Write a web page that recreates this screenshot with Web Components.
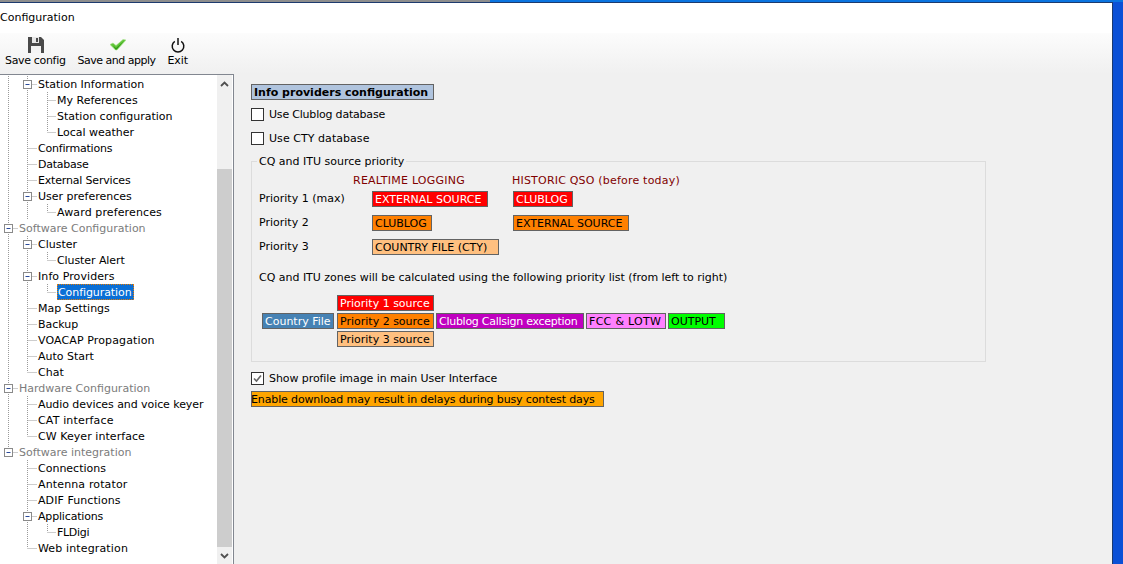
<!DOCTYPE html>
<html><head><meta charset="utf-8">
<style>
html,body{margin:0;padding:0;height:100%;overflow:hidden;background:#0b50d6}
body{font:11px "DejaVu Sans",sans-serif;color:#000}
</style></head>
<body>
<app-window>
  <span slot="title">Configuration</span>
  <tool-button slot="tools" icon="save" label="Save config" ls="-.33"></tool-button>
  <tool-button slot="tools" icon="check" label="Save and apply" ls="-.5"></tool-button>
  <tool-button slot="tools" icon="power" label="Exit" ls="-.1"></tool-button>
  <tree-view slot="tree"></tree-view>
  <info-panel slot="main"></info-panel>
</app-window>
<script>
function shadow(el,html){el.attachShadow({mode:'open'}).innerHTML=html;return el.shadowRoot}
const FONT='font-family:"DejaVu Sans",sans-serif;font-size:11px;';

customElements.define('app-window',class extends HTMLElement{constructor(){super();shadow(this,`<style>
:host{display:block;height:564px;box-sizing:border-box;${FONT}}
.strip{display:flex;height:2px}
.strip i{display:block}
.strip .a{width:490px;background:#8d8d8d}
.strip .b{flex:1;background:#0a74e0}
.edge{height:1px;width:1113px;background:#1c3a6e}
.win{width:1112px;height:561px;border-right:1px solid #1c3a6e;display:flex;flex-direction:column;background:#f0f0f0}
.title{height:30px;background:#fff;line-height:30px;flex:none;white-space:nowrap}
.bar{height:41px;flex:none;background:linear-gradient(#fcfcfc,#f0f0f0);display:flex;gap:12px;padding-left:5px;box-sizing:border-box}
.body{flex:1;display:flex;min-height:0}
.left{width:234px;flex:none;display:flex}
.right{flex:1}
</style>
<div class="strip"><i class="a"></i><i class="b"></i></div><div class="edge"></div>
<div class="win">
<div class="title"><slot name="title"></slot></div>
<div class="bar"><slot name="tools"></slot></div>
<div class="body"><div class="left"><slot name="tree"></slot></div><div class="right"><slot name="main"></slot></div></div>
</div>`)}});

const ICONS={
save:`<svg width="16" height="16" viewBox="0 0 16 16"><path d="M0 0H13L16 3V16H0Z" fill="#4a4a4a"/><rect x="4" y="0" width="7" height="6" fill="#e8e8e8"/><rect x="8" y="1" width="2" height="4" fill="#4a4a4a"/><rect x="3" y="9" width="10" height="7" fill="#f4f4f4"/></svg>`,
check:`<svg width="16" height="16" viewBox="0 0 16 16"><path d="M0 7.500L3 6L6 8.500L13 2.500L16 3L7 13H5.500Z" fill="#62c63a" stroke="#a6e08c" stroke-width=".6"/><path d="M3 8.500L6 11L14 4L6.500 12.500H5.500Z" fill="#2f9a18"/></svg>`,
power:`<svg width="16" height="16" viewBox="0 0 16 16" fill="none" stroke="#111" stroke-width="1.500"><path d="M4.800 4.300A5.800 5.800 0 1 0 11.200 4.300"/><path d="M8 1V8"/></svg>`};
customElements.define('tool-button',class extends HTMLElement{constructor(){super();
const ic=this.getAttribute('icon');
shadow(this,`<style>:host{display:flex;flex-direction:column;align-items:center;${FONT}}
.i{height:16px;margin-top:4px;margin-left:${ic==='power'?0:2}px}svg{display:block}.l{line-height:18px;margin-top:-1px;white-space:nowrap;letter-spacing:${this.getAttribute('ls')}px}</style>
<div class="i">${ICONS[ic]}</div><div class="l">${this.getAttribute('label')}</div>`)}});

const ROWS=[
['Station Information',1,1,''],['My References',2,0,''],['Station configuration',2,0,''],['Local weather',2,0,'l'],
['Confirmations',1,0,'',-.2],['Database',1,0,'',-.25],['External Services',1,0,'',-.18],['User preferences',1,1,''],['Award preferences',2,0,'l',.12],
['Software Configuration',0,1,'r'],
['Cluster',1,1,''],['Cluster Alert',2,0,'l',-.08],['Info Providers',1,1,'',.08],['Configuration',2,0,'ls',-.08],['Map Settings',1,0,''],['Backup',1,0,''],['VOACAP Propagation',1,0,'',.12],['Auto Start',1,0,''],['Chat',1,0,'e'],
['Hardware Configuration',0,1,'r'],
['Audio devices and voice keyer',1,0,'',-.07],['CAT interface',1,0,'',.15],['CW Keyer interface',1,0,'e',.06],
['Software integration',0,1,'rz'],
['Connections',1,0,'n'],['Antenna rotator',1,0,'n',.14],['ADIF Functions',1,0,'n',.07],['Applications',1,1,'n',-.17],['FLDigi',2,0,'ln',-.3],['Web integration',1,0,'en',.14]];

customElements.define('tree-row',class extends HTMLElement{constructor(){super();
const t=this.getAttribute('text'),lv=+this.getAttribute('level'),ex=this.hasAttribute('exp'),f=this.getAttribute('flags')||'';
const X=[8.5,27.5,47.5],W=[19,38,57][lv],dot='stroke="#9a9a9a" stroke-dasharray="1 1"';
let s='';
const noRoot=f.includes('n');
if(lv===0){ s+=f.includes('z')?`<path d="M8.500 0V4" ${dot}/>`:`<path d="M8.500 0V16" ${dot}/>`; }
else if(!noRoot) s+=`<path d="M8.500 0V16" ${dot}/>`;
if(lv===1) s+=`<path d="M27.500 0V${f.includes('e')?8:16}" ${dot}/>`;
if(lv===2){ s+=`<path d="M27.500 0V16" ${dot}/><path d="M47.500 0V${f.includes('l')?8:16}" ${dot}/>`; }
s+=`<path d="M${X[lv]} 8.500H${W-1}" ${dot}/>`;
if(ex){const c=X[lv];s+=`<rect x="${c-4}" y="4.500" width="8" height="8" fill="#fff" stroke="#8a8a8a"/><path d="M${c-2} 8.500H${c+2}" stroke="#2a4a9a"/>`}
shadow(this,`<style>:host{display:flex;height:16px;${FONT}white-space:nowrap}
svg{flex:none;display:block}
span{line-height:18px;height:16px;letter-spacing:${this.getAttribute('ls')||0}px}
.r{color:#7c7c7c}
.s{background:#0a6fd6;color:#fff;outline:1px dotted #e87a00;outline-offset:-1px;padding:0 2px 0 1px}
</style><svg width="${W}" height="16">${s}</svg><span class="${f.includes('r')?'r':f.includes('s')?'s':''}">${t}</span>`)}});

customElements.define('tree-view',class extends HTMLElement{constructor(){super();
const rows=ROWS.map(r=>`<tree-row text="${r[0]}" level="${r[1]}" ${r[2]?'exp':''} flags="${r[3]}" ls="${r[4]||0}"></tree-row>`).join('');
shadow(this,`<style>:host{display:flex;flex:1;background:#fff;border-top:1px solid #828790;border-right:1px solid #828790;height:490px;box-sizing:border-box;overflow:hidden}
.list{flex:1;padding-top:1px;min-width:0}
.sb{width:15px;flex:none;background:#f0f0f0;display:flex;flex-direction:column;margin-right:1px}
.up,.dn{height:17px;flex:none;display:flex;align-items:center;justify-content:center}
.tr{height:77px;flex:none}.th{flex:1;background:#cdcdcd}
svg{display:block}
</style><div class="list">${rows}</div>
<div class="sb"><div class="up"><svg width="9" height="6"><path d="M1 5L4.500 1.500L8 5" fill="none" stroke="#505050" stroke-width="1.800"/></svg></div><div class="tr"></div><div class="th"></div><div class="dn"><svg width="9" height="6"><path d="M1 1L4.500 4.500L8 1" fill="none" stroke="#505050" stroke-width="1.800"/></svg></div></div>`)}});

customElements.define('tag-box',class extends HTMLElement{constructor(){super();
shadow(this,`<style>:host{display:inline-block;box-sizing:border-box;height:16px;line-height:16px;border:1px solid #636363;padding:0 var(--p,2px);white-space:nowrap;overflow:hidden;background:var(--bg);color:var(--fg,#000);font-weight:var(--w,normal);letter-spacing:var(--ls,0);text-indent:var(--ti,0);${FONT}}</style><slot></slot>`)}});

customElements.define('check-row',class extends HTMLElement{constructor(){super();
const c=this.hasAttribute('checked');
shadow(this,`<style>:host{display:flex;align-items:flex-start;gap:5px;height:14px;${FONT}line-height:14px;letter-spacing:var(--ls,0)}
.b{width:13px;height:13px;box-sizing:border-box;border:1px solid #333;background:#fff;flex:none}
span{line-height:14px}
svg{display:block}</style><div class="b">${c?'<svg width="11" height="11"><path d="M2 5.500L4.500 8L9 2.500" fill="none" stroke="#666" stroke-width="1.600"/></svg>':''}</div><span><slot></slot></span>`)}});

customElements.define('group-box',class extends HTMLElement{constructor(){super();
shadow(this,`<style>:host{display:block;box-sizing:border-box;width:735px;height:201px;border:1px solid #dcdcdc;${FONT}position:relative}
.t{position:absolute;left:5px;top:-7px;background:#f0f0f0;padding:0 2px;line-height:14px}
</style><div class="t"><slot name="title"></slot></div><slot></slot>`)}});

customElements.define('info-panel',class extends HTMLElement{constructor(){super();
shadow(this,`<style>:host{display:block;${FONT}padding:10px 0 0 17px;box-sizing:border-box}
tag-box{--bg:#fff}
.head{--bg:#b0c4de;--w:bold;--p:2px;width:183px;display:block}
.c1{margin-top:8px;--ls:-.2px}.c2{margin-top:10px;--ls:.05px}
group-box{margin-top:15px}
.hdr{display:flex;color:#800000;line-height:14px;padding-top:12px;height:14px}
.hdr span:first-child{margin-left:101px;width:159px;letter-spacing:.25px}
.hdr span:last-child{letter-spacing:.2px}
.pri{display:grid;grid-template-columns:113px 141px auto;grid-auto-rows:24px;margin:3px 0 0 7px;line-height:16px;justify-items:start}
.pri>span{line-height:16px;height:16px}
.txt{margin:8px 0 0 7px;line-height:14px;height:14px;letter-spacing:-.02px}
.flow{display:flex;align-items:center;gap:2px;margin:10px 0 0 10px}
.col{display:flex;flex-direction:column;gap:2px}
.col tag-box{width:97px}
.red{--bg:#ff0000;--fg:#fff}.or{--bg:#ff8000}.pe{--bg:#ffc080}
.st{--bg:#4682b4;--fg:#fff;width:72px;margin-right:1px}
.mg{--bg:#c000c0;--fg:#fff;width:148px;--ls:-.27px}
.pk{--bg:#ff80ff;width:80px;--ls:.3px}.gr{--bg:#00ff00;width:57px}
.c3{margin-top:10px;--ls:-.08px}
.warn{--bg:#ffa500;--p:0;width:353px;margin-top:5px;display:block;--ls:-.13px;--ti:-1px}
.w1{width:116px}.w2{width:127px}.w3{width:60px}.w4{width:116px}
</style>
<tag-box class="head">Info providers configuration</tag-box>
<check-row class="c1">Use Clublog database</check-row>
<check-row class="c2">Use CTY database</check-row>
<group-box><span slot="title">CQ and ITU source priority</span>
<div class="hdr"><span>REALTIME LOGGING</span><span>HISTORIC QSO (before today)</span></div>
<div class="pri">
<span>Priority 1 (max)</span><tag-box class="red w1">EXTERNAL SOURCE</tag-box><tag-box class="red w3">CLUBLOG</tag-box>
<span>Priority 2</span><tag-box class="or w3">CLUBLOG</tag-box><tag-box class="or w4">EXTERNAL SOURCE</tag-box>
<span>Priority 3</span><tag-box class="pe w2">COUNTRY FILE (CTY)</tag-box><span></span>
</div>
<div class="txt">CQ and ITU zones will be calculated using the following priority list (from left to right)</div>
<div class="flow"><tag-box class="st">Country File</tag-box>
<div class="col"><tag-box class="red">Priority 1 source</tag-box><tag-box class="or">Priority 2 source</tag-box><tag-box class="pe">Priority 3 source</tag-box></div>
<tag-box class="mg">Clublog Callsign exception</tag-box><tag-box class="pk">FCC &amp; LOTW</tag-box><tag-box class="gr">OUTPUT</tag-box></div>
</group-box>
<check-row class="c3" checked>Show profile image in main User Interface</check-row>
<tag-box class="warn">Enable download may result in delays during busy contest days</tag-box>`)}});
</script>
</body></html>
